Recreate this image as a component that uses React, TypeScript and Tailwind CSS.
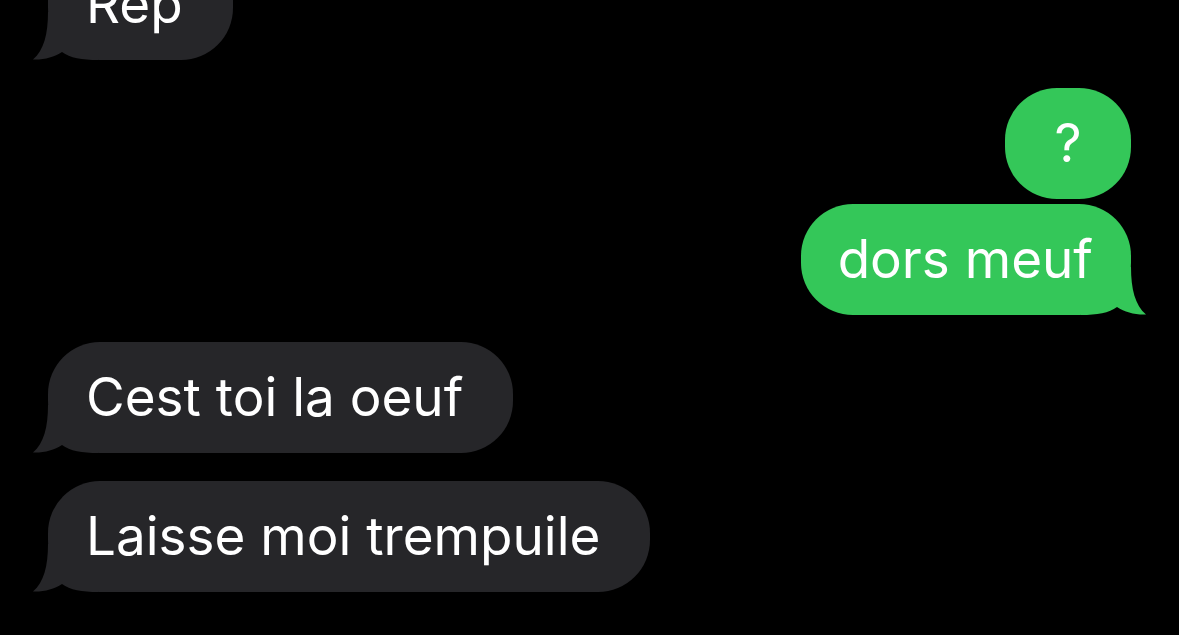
import React from "react";

type Msg = { text: string; fromMe: boolean; tail: boolean; gap: number };

const messages: Msg[] = [
  { text: "Rep", fromMe: false, tail: true, gap: 28 },
  { text: "?", fromMe: true, tail: false, gap: 5 },
  { text: "dors meuf", fromMe: true, tail: true, gap: 27 },
  { text: "Cest toi la oeuf", fromMe: false, tail: true, gap: 28 },
  { text: "Laisse moi trempuile", fromMe: false, tail: true, gap: 0 },
];

function Tail({ fromMe }: { fromMe: boolean }) {
  return (
    <svg
      width="66"
      height="48"
      viewBox="0 0 66 48"
      className={
        fromMe
          ? "absolute bottom-0 right-[-16px] -scale-x-100 fill-[#34c759]"
          : "absolute bottom-0 left-[-16px] fill-[#262629]"
      }
    >
      <path d="M16 0 C16 22 12 38 1 47.5 C12 48 22 45 30 40 C38 46 50 48 66 48 L66 0 Z" />
    </svg>
  );
}

function Bubble({ msg }: { msg: Msg }) {
  const color = msg.fromMe ? "bg-[#34c759]" : "bg-[#262629]";
  const pad = msg.fromMe
    ? msg.text.length === 1
      ? "justify-center w-[126px]"
      : "pl-[37px] pr-[38px]"
    : "pl-[38px] pr-[50px]";
  return (
    <div className={`flex ${msg.fromMe ? "justify-end pr-[48px]" : "justify-start pl-[48px]"}`} style={{ marginBottom: msg.gap }}>
      <div className={`relative flex h-[111px] items-center rounded-[52px] ${color} ${pad}`}>
        {msg.tail && <Tail fromMe={msg.fromMe} />}
        <span className="relative text-[53px] leading-none text-white">{msg.text}</span>
      </div>
    </div>
  );
}

export default function App() {
  return (
    <div className="h-[635px] w-[1179px] overflow-hidden bg-black font-['Inter','Noto_Sans',sans-serif]">
      <div className="mt-[-51px] flex flex-col">
        {messages.map((m, i) => (
          <Bubble key={i} msg={m} />
        ))}
      </div>
    </div>
  );
}
